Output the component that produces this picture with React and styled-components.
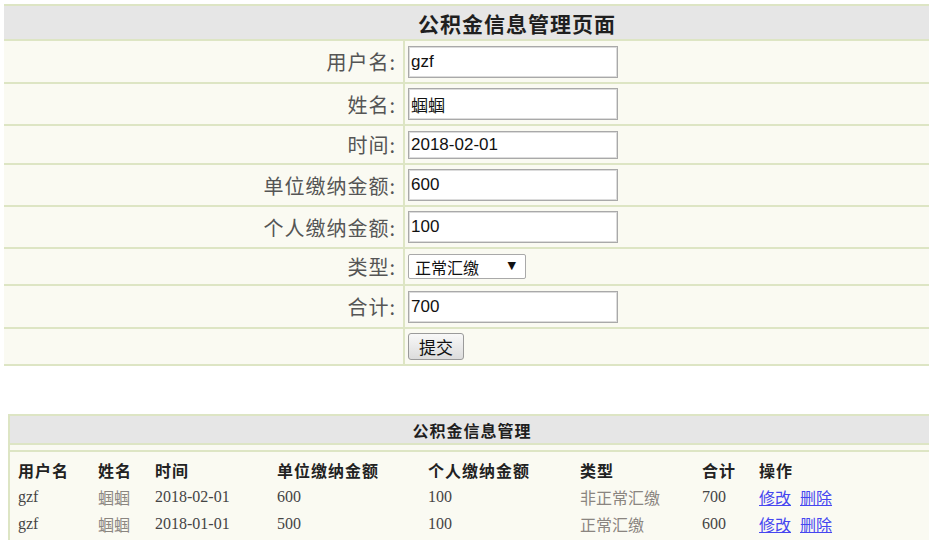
import React from "react";
import styled, { createGlobalStyle } from "styled-components";

const GlobalStyle = createGlobalStyle`
  html, body {
    margin: 0;
    padding: 0;
    background: #ffffff;
    overflow: hidden;
  }
  body {
    font-family: "Liberation Serif", "Noto Sans CJK SC", serif;
  }
  * { box-sizing: border-box; }
`;

const LINE = "#dde5c4";
const CREAM = "#fafaf2";
const GRAY = "#e6e6e6";

const Page = styled.div`
  width: 100vw;
  height: 100vh;
  overflow: hidden;
  padding: 4px 0 0 4px;
  display: flex;
  flex-direction: column;
  align-items: flex-start;
`;

const FormTable = styled.div`
  width: 1026px;
  flex: none;
  border-top: 2px solid ${LINE};
  background: ${CREAM};
  display: flex;
  flex-direction: column;
`;

const FormTitle = styled.div`
  height: 35px;
  background: ${GRAY};
  border-bottom: 2px solid ${LINE};
  display: flex;
  align-items: center;
  justify-content: center;
  font-family: "Noto Sans CJK SC", sans-serif;
  font-weight: 700;
  font-size: 21px;
  color: #1f1f1f;
  letter-spacing: 1px;
`;

const FormRow = styled.div`
  display: grid;
  grid-template-columns: 401px 1fr;
  height: ${(p) => p.$h + 2}px;
  border-bottom: 2px solid ${LINE};
`;

const Label = styled.div`
  display: flex;
  align-items: center;
  justify-content: flex-end;
  padding-right: 7px;
  border-right: 2px solid ${LINE};
  font-family: "Noto Sans CJK SC", sans-serif;
  font-size: 20px;
  color: #555;
  letter-spacing: 1px;
`;

const Field = styled.div`
  display: flex;
  align-items: center;
  padding-left: 3px;
`;

const TextInput = styled.input`
  width: 210px;
  height: ${(p) => p.$h || 32}px;
  border: 1px solid #a9a9a9;
  box-shadow: inset 0 0 0 1px #dcdcdc;
  background: #fff;
  padding: 0 2px;
  font-family: "Liberation Sans", "Noto Sans CJK SC", sans-serif;
  font-size: 17px;
  color: #111;
  outline: none;
`;

const SelectWrap = styled.div`
  position: relative;
  width: 118px;
  height: 25px;
  &::after {
    content: "▼";
    position: absolute;
    right: 10px;
    top: 5px;
    font-size: 11px;
    color: #111;
    pointer-events: none;
    font-family: "DejaVu Sans", sans-serif;
  }
`;

const Select = styled.select`
  appearance: none;
  width: 100%;
  height: 100%;
  border: 1px solid #a9a9a9;
  border-radius: 2px;
  background: #fff;
  padding: 0 0 0 6px;
  font-family: "Noto Sans CJK SC", sans-serif;
  font-size: 16px;
  color: #111;
  outline: none;
`;

const SubmitButton = styled.button`
  width: 56px;
  height: 27px;
  border: 1px solid #9a9a9a;
  border-radius: 3px;
  background: linear-gradient(#f8f8f8, #dcdcdc);
  font-family: "Noto Sans CJK SC", sans-serif;
  font-size: 17px;
  color: #111;
  padding: 0;
  line-height: 1;
`;

const ListTable = styled.div`
  width: 926px;
  flex: none;
  margin: 48px 0 0 4px;
  border-top: 2px solid ${LINE};
  border-left: 2px solid ${LINE};
  background: ${CREAM};
  display: flex;
  flex-direction: column;
`;

const Caption = styled.div`
  height: 29px;
  background: ${GRAY};
  border-bottom: 2px solid ${LINE};
  display: flex;
  align-items: center;
  justify-content: center;
  font-family: "Noto Sans CJK SC", sans-serif;
  font-weight: 700;
  font-size: 16px;
  color: #1f1f1f;
  letter-spacing: 1px;
`;

const Spacer = styled.div`
  height: 7px;
  border-bottom: 2px solid ${LINE};
`;

const Grid = styled.div`
  padding: 4px 0 6px 8px;
  display: flex;
  flex-direction: column;
`;

const GridRow = styled.div`
  display: grid;
  grid-template-columns: 80px 57px 122px 151px 152px 122px 57px 1fr;
  height: 27px;
  align-items: center;
`;

const Th = styled.div`
  font-family: "Noto Sans CJK SC", sans-serif;
  font-weight: 700;
  font-size: 16px;
  color: #222;
  letter-spacing: 1px;
`;

const Td = styled.div`
  font-size: 16px;
  color: ${(p) => (p.$soft ? "#8a8580" : "#444")};
  white-space: nowrap;
`;

const Links = styled.div`
  display: flex;
  gap: 9px;
`;

const Link = styled.a`
  font-family: "Noto Sans CJK SC", sans-serif;
  font-size: 16px;
  color: #4646f0;
  text-decoration: underline;
  cursor: pointer;
`;

const fields = [
  { label: "用户名:", value: "gzf", h: 41 },
  { label: "姓名:", value: "蝈蝈", h: 40 },
  { label: "时间:", value: "2018-02-01", h: 37, ih: 28 },
  { label: "单位缴纳金额:", value: "600", h: 40 },
  { label: "个人缴纳金额:", value: "100", h: 40 },
];

const records = [
  { user: "gzf", name: "蝈蝈", time: "2018-02-01", unit: "600", self: "100", type: "非正常汇缴", total: "700" },
  { user: "gzf", name: "蝈蝈", time: "2018-01-01", unit: "500", self: "100", type: "正常汇缴", total: "600" },
];

export default function App() {
  return (
    <>
      <GlobalStyle />
      <Page>
        <FormTable>
          <FormTitle>公积金信息管理页面</FormTitle>
          {fields.map((f) => (
            <FormRow key={f.label} $h={f.h}>
              <Label>{f.label}</Label>
              <Field>
                <TextInput defaultValue={f.value} $h={f.ih} />
              </Field>
            </FormRow>
          ))}
          <FormRow $h={35}>
            <Label>类型:</Label>
            <Field>
              <SelectWrap>
                <Select defaultValue="正常汇缴">
                  <option>正常汇缴</option>
                  <option>非正常汇缴</option>
                </Select>
              </SelectWrap>
            </Field>
          </FormRow>
          <FormRow $h={41}>
            <Label>合计:</Label>
            <Field>
              <TextInput defaultValue="700" />
            </Field>
          </FormRow>
          <FormRow $h={35}>
            <Label />
            <Field>
              <SubmitButton>提交</SubmitButton>
            </Field>
          </FormRow>
        </FormTable>

        <ListTable>
          <Caption>公积金信息管理</Caption>
          <Spacer />
          <Grid>
            <GridRow>
              <Th>用户名</Th>
              <Th>姓名</Th>
              <Th>时间</Th>
              <Th>单位缴纳金额</Th>
              <Th>个人缴纳金额</Th>
              <Th>类型</Th>
              <Th>合计</Th>
              <Th>操作</Th>
            </GridRow>
            {records.map((r) => (
              <GridRow key={r.time}>
                <Td>{r.user}</Td>
                <Td $soft>{r.name}</Td>
                <Td>{r.time}</Td>
                <Td>{r.unit}</Td>
                <Td>{r.self}</Td>
                <Td $soft>{r.type}</Td>
                <Td>{r.total}</Td>
                <Links>
                  <Link>修改</Link>
                  <Link>删除</Link>
                </Links>
              </GridRow>
            ))}
          </Grid>
        </ListTable>
      </Page>
    </>
  );
}
